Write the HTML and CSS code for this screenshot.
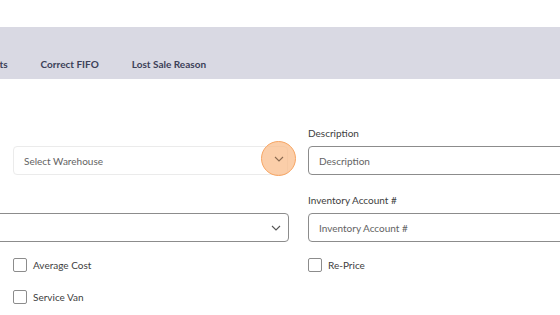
FILE: index.html
```html
<!doctype html>
<html lang="en">
<head>
<meta charset="utf-8">
<meta name="viewport" content="width=device-width, initial-scale=1">
<title>Inventory Item</title>
<link rel="stylesheet" href="styles.css">
</head>
<body>

<div class="tabs">
	<span class="tab tab--cut">Units</span>
	<span class="tab">Correct FIFO</span>
	<span class="tab">Lost Sale Reason</span>
</div>

<div class="form">
	<div class="field field--b row-1">
		<div class="select select--light">
			<span class="select__text">Select Warehouse</span>
			<span class="hotspot">
				<svg width="10" height="6" viewBox="0 0 10 6"><path d="M1 1l4 4 4-4" fill="none" stroke="#8a6a50" stroke-width="1.1"/></svg>
			</span>
		</div>
	</div>
	<div class="field field--c row-1">
		<label for="desc">Description</label>
		<input type="text" id="desc" placeholder="Description">
	</div>

	<div class="field field--ab row-2">
		<div class="select">
			<span class="select__text"></span>
			<svg width="10" height="6" viewBox="0 0 10 6"><path d="M1 1l4 4 4-4" fill="none" stroke="#555" stroke-width="1.1"/></svg>
		</div>
	</div>
	<div class="field field--c row-2">
		<label for="inv">Inventory Account #</label>
		<input type="text" id="inv" placeholder="Inventory Account #">
	</div>

	<div class="checks field--b">
		<label class="check"><span class="box"></span>Average Cost</label>
		<label class="check"><span class="box"></span>Service Van</label>
	</div>
	<div class="checks field--c">
		<label class="check"><span class="box"></span>Re-Price</label>
	</div>
</div>

</body>
</html>
```

FILE: styles.css
```css
body {
	margin: 0;
	padding: 0;
	overflow: hidden;
	font-family: 'Lato', sans-serif;
	font-size: 10px;
	color: #404040;
	background: #fff;
}

.tabs {
	display: flex;
	align-items: flex-end;
	gap: 33px;
	height: 52px;
	margin-top: 27px;
	padding-bottom: 9px;
	box-sizing: border-box;
	background: #d9d9e3;
	overflow: hidden;
}
.tab {
	font-size: 10px;
	font-weight: 700;
	color: #3c4058;
	white-space: nowrap;
}
.tab--cut {
	margin-left: -16px;
}

.form {
	display: grid;
	grid-template-columns: 275px 275px 275px;
	column-gap: 20px;
	margin-left: -282px;
	padding-top: 48px;
}

.field {
	display: flex;
	flex-direction: column;
	justify-content: flex-end;
}
.field--b { grid-column: 2; }
.field--c { grid-column: 3; }
.field--ab { grid-column: 1 / 3; margin-right: -1px; }
.row-2 { margin-top: 19px; }

label {
	display: block;
	margin-bottom: 7px;
	color: #404040;
}

input[type="text"] {
	height: 29px;
	margin: 0;
	padding: 0 10px;
	box-sizing: border-box;
	border: 1px solid #8c8c8c;
	border-radius: 4px;
	font-family: inherit;
	font-size: 10px;
	color: #404040;
	outline: none;
}
input::placeholder {
	color: #636363;
}

.select {
	display: flex;
	align-items: center;
	justify-content: space-between;
	height: 29px;
	padding: 0 7px 0 10px;
	box-sizing: border-box;
	border: 1px solid #8c8c8c;
	border-radius: 4px;
}
.select--light {
	border-color: #ebebeb;
	padding-right: 0;
}
.select__text {
	color: #636363;
}

.hotspot {
	display: flex;
	align-items: center;
	justify-content: center;
	width: 35px;
	height: 35px;
	margin-right: -9px;
	margin-top: -4px;
	box-sizing: border-box;
	border: 1.5px solid #f7a563;
	border-radius: 50%;
	background: rgba(250, 190, 140, 0.75);
}

.checks {
	display: flex;
	flex-direction: column;
	gap: 18px;
	margin-top: 16px;
}
.check {
	display: flex;
	align-items: center;
	gap: 6px;
	margin: 0;
	color: #404040;
}
.box {
	width: 14px;
	height: 14px;
	box-sizing: border-box;
	border: 1px solid #8c8c8c;
	border-radius: 2px;
}
```
